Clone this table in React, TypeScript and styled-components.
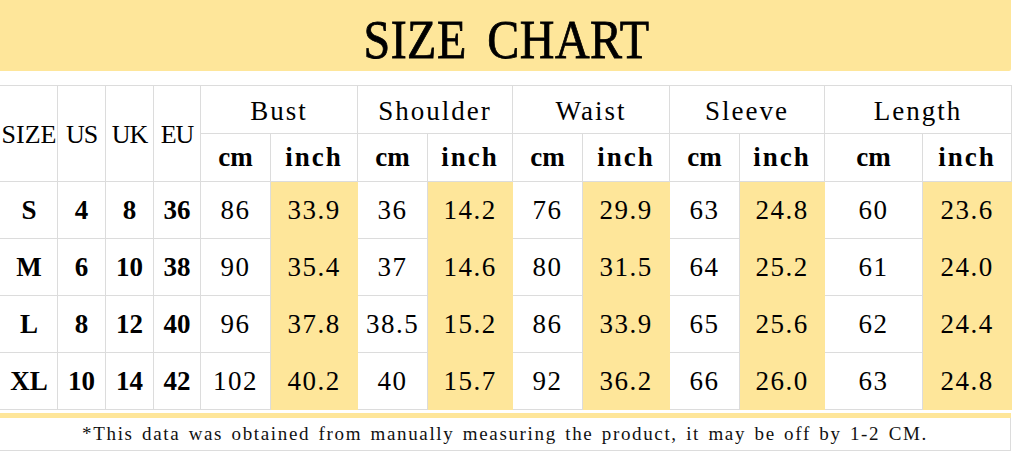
import React from "react";
import styled, { createGlobalStyle } from "styled-components";

const YELLOW = "#FEE69A";
const LINE = "#DCDCDC";
const SERIF = `"Liberation Serif", "DejaVu Serif", serif`;

const GlobalStyle = createGlobalStyle`
  html, body { margin: 0; padding: 0; background: #fff; }
  body { font-family: ${SERIF}; color: #000; }
`;

const Page = styled.div`
  width: 1014px;
  height: 452px;
  display: flex;
  flex-direction: column;
  overflow: hidden;
`;

const Banner = styled.header`
  width: 1011px;
  height: 71px;
  background: ${YELLOW};
  border-radius: 0 0 2px 0;
  display: flex;
  align-items: center;
  justify-content: center;
  margin-bottom: 14px;
`;

const Title = styled.h1`
  margin: 0;
  padding-left: 2px;
  font-family: ${SERIF};
  font-size: 48px;
  font-weight: 400;
  letter-spacing: 0.5px;
  word-spacing: 8px;
  line-height: 1;
  color: #000;
  transform: translateY(3px) scaleY(1.16);
  -webkit-text-stroke: 0.7px #000;
`;

const Table = styled.table`
  width: 1011px;
  border-collapse: collapse;
  table-layout: fixed;
  font-family: ${SERIF};
  color: #000;
`;

const HeadRow = styled.tr`
  height: 48px;
`;

const BodyRow = styled.tr`
  height: 57px;
`;

const Cell = styled.td<{ $yellow?: boolean; $bold?: boolean; $first?: boolean }>`
  padding: 0;
  text-align: center;
  vertical-align: middle;
  font-size: 27px;
  letter-spacing: ${(p) => (p.$bold ? 0 : 1.5)}px;
  font-weight: ${(p) => (p.$bold ? 700 : 400)};
  background: ${(p) => (p.$yellow ? YELLOW : "#fff")};
  border: 1px solid ${(p) => (p.$yellow ? YELLOW : LINE)};
  border-left-color: ${(p) => (p.$first ? "transparent" : p.$yellow ? YELLOW : LINE)};
  white-space: nowrap;
  line-height: 1;
`;

const HeadCell = styled.th<{ $bold?: boolean; $first?: boolean; $spacing?: number; $size?: number }>`
  padding: 0;
  padding-top: ${(p) => (p.$bold ? 0 : 3)}px;
  text-align: center;
  vertical-align: middle;
  font-size: ${(p) => p.$size ?? 27}px;
  letter-spacing: ${(p) => p.$spacing ?? 2}px;
  font-weight: ${(p) => (p.$bold ? 700 : 400)};
  background: #fff;
  border: 1px solid ${LINE};
  border-left-color: ${(p) => (p.$first ? "transparent" : LINE)};
  white-space: nowrap;
  line-height: 1;
`;

const Band = styled.div`
  width: 1011px;
  height: 5px;
  background: ${YELLOW};
  margin-top: 3px;
`;

const Footer = styled.footer`
  width: 1010px;
  height: 32px;
  border-right: 1px solid ${LINE};
  border-bottom: 1px solid ${LINE};
  display: flex;
  align-items: center;
  justify-content: center;
  font-family: ${SERIF};
  font-size: 19px;
  letter-spacing: 1.65px;
  word-spacing: 2px;
  color: #111;
  white-space: nowrap;
`;

const widths = [57, 48, 48, 47, 70, 87, 70, 85, 70, 87, 70, 85, 98, 89];
const groups = ["Bust", "Shoulder", "Waist", "Sleeve", "Length"];

type Row = { size: string; us: string; uk: string; eu: string; vals: string[] };

const rows: Row[] = [
  { size: "S", us: "4", uk: "8", eu: "36", vals: ["86", "33.9", "36", "14.2", "76", "29.9", "63", "24.8", "60", "23.6"] },
  { size: "M", us: "6", uk: "10", eu: "38", vals: ["90", "35.4", "37", "14.6", "80", "31.5", "64", "25.2", "61", "24.0"] },
  { size: "L", us: "8", uk: "12", eu: "40", vals: ["96", "37.8", "38.5", "15.2", "86", "33.9", "65", "25.6", "62", "24.4"] },
  { size: "XL", us: "10", uk: "14", eu: "42", vals: ["102", "40.2", "40", "15.7", "92", "36.2", "66", "26.0", "63", "24.8"] },
];

export default function App() {
  return (
    <>
      <GlobalStyle />
      <Page>
        <Banner>
          <Title>SIZE CHART</Title>
        </Banner>
        <Table>
          <colgroup>
            {widths.map((w, i) => (
              <col key={i} style={{ width: w }} />
            ))}
          </colgroup>
          <thead>
            <HeadRow>
              <HeadCell rowSpan={2} $first $spacing={0} $size={26}>
                SIZE
              </HeadCell>
              <HeadCell rowSpan={2} $spacing={-1} $size={26}>
                US
              </HeadCell>
              <HeadCell rowSpan={2} $spacing={-1} $size={26}>
                UK
              </HeadCell>
              <HeadCell rowSpan={2} $spacing={-1} $size={26}>
                EU
              </HeadCell>
              {groups.map((g) => (
                <HeadCell key={g} colSpan={2}>
                  {g}
                </HeadCell>
              ))}
            </HeadRow>
            <HeadRow>
              {groups.map((g) => (
                <React.Fragment key={g}>
                  <HeadCell $bold $spacing={0}>
                    cm
                  </HeadCell>
                  <HeadCell $bold $spacing={2}>
                    inch
                  </HeadCell>
                </React.Fragment>
              ))}
            </HeadRow>
          </thead>
          <tbody>
            {rows.map((r) => (
              <BodyRow key={r.size}>
                <Cell $bold $first>
                  {r.size}
                </Cell>
                <Cell $bold>{r.us}</Cell>
                <Cell $bold>{r.uk}</Cell>
                <Cell $bold>{r.eu}</Cell>
                {r.vals.map((v, i) => (
                  <Cell key={i} $yellow={i % 2 === 1}>
                    {v}
                  </Cell>
                ))}
              </BodyRow>
            ))}
          </tbody>
        </Table>
        <Band />
        <Footer>
          *This data was obtained from manually measuring the product, it may be off by 1-2 CM.
        </Footer>
      </Page>
    </>
  );
}
